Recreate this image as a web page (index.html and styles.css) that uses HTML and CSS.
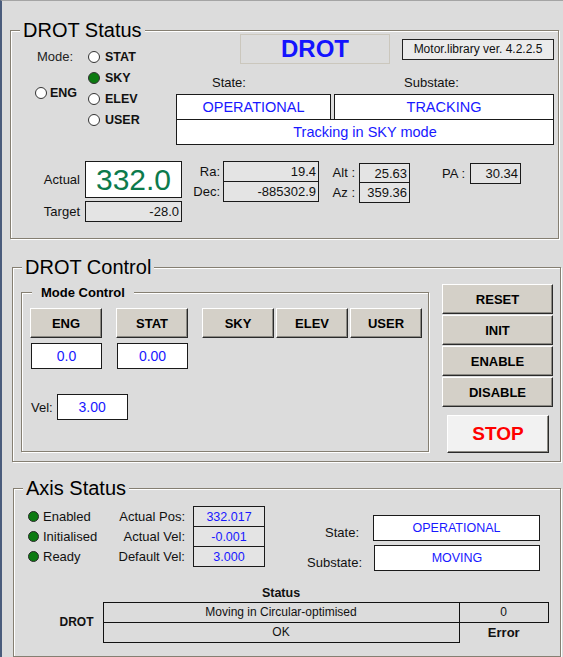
FILE: index.html
```html
<!DOCTYPE html>
<html lang="en">
<head>
  <meta charset="UTF-8">
  <meta name="viewport" content="width=device-width, initial-scale=1.0">
  <title>DROT</title>
  <link rel="stylesheet" href="styles.css">
</head>
<body>
  <div class="screen">

    <!-- DROT Status -->
    <fieldset class="group status-group">
      <legend>DROT Status</legend>
      <div class="status-top">
        <div class="mode-select">
          <span class="mode-label">Mode:</span>
          <span class="radio r-stat"><span class="dot"></span>STAT</span>
          <span class="radio r-sky"><span class="dot on"></span>SKY</span>
          <span class="radio r-eng"><span class="dot"></span>ENG</span>
          <span class="radio r-elev"><span class="dot"></span>ELEV</span>
          <span class="radio r-user"><span class="dot"></span>USER</span>
        </div>
        <div class="state-area">
          <div class="state-head">
            <div class="drot-title">DROT</div>
            <div class="lib-version">Motor.library ver. 4.2.2.5</div>
          </div>
          <div class="state-labels">
            <span class="lbl-state">State:</span>
            <span>Substate:</span>
          </div>
          <div class="state-row">
            <div class="field white blue state-cell">OPERATIONAL</div>
            <div class="field white blue substate-cell">TRACKING</div>
          </div>
          <div class="field white blue mode-text">Tracking in SKY mode</div>
        </div>
      </div>

      <div class="status-values">
        <div class="vals vals-actual">
          <span class="lbl">Actual</span>
          <div class="field white actual-val">332.0</div>
          <span class="lbl">Target</span>
          <div class="field grey num">-28.0</div>
        </div>
        <div class="vals vals-radec">
          <span class="lbl">Ra:</span>
          <div class="field grey num open">19.4</div>
          <span class="lbl">Dec:</span>
          <div class="field grey num">-885302.9</div>
        </div>
        <div class="vals vals-altaz">
          <span class="lbl">Alt :</span>
          <div class="field grey num open">25.63</div>
          <span class="lbl">Az :</span>
          <div class="field grey num">359.36</div>
        </div>
        <div class="vals vals-pa">
          <span class="lbl">PA :</span>
          <div class="field grey num">30.34</div>
        </div>
      </div>
    </fieldset>

    <!-- DROT Control -->
    <fieldset class="group control-group">
      <legend>DROT Control</legend>
      <div class="control-row">
        <fieldset class="group mode-group">
          <legend>Mode Control</legend>
          <div class="mode-buttons">
            <div class="mode-col">
              <div class="btn">ENG</div>
              <div class="field white blue setval">0.0</div>
            </div>
            <div class="mode-col">
              <div class="btn">STAT</div>
              <div class="field white blue setval">0.00</div>
            </div>
            <div class="btn sky-btn">SKY</div>
            <div class="btn">ELEV</div>
            <div class="btn">USER</div>
          </div>
          <div class="vel-row">
            <span>Vel:</span>
            <div class="field white blue setval">3.00</div>
          </div>
        </fieldset>

        <div class="cmd-col">
          <div class="btn wide">RESET</div>
          <div class="btn wide">INIT</div>
          <div class="btn wide">ENABLE</div>
          <div class="btn wide">DISABLE</div>
          <div class="btn stop">STOP</div>
        </div>
      </div>
    </fieldset>

    <!-- Axis Status -->
    <fieldset class="group axis-group">
      <legend>Axis Status</legend>
      <div class="axis-top">
        <div class="axis-info">
          <span class="led-item"><span class="led"></span>Enabled</span>
          <span class="lbl">Actual Pos:</span>
          <div class="field grey blue open">332.017</div>
          <span class="led-item"><span class="led"></span>Initialised</span>
          <span class="lbl">Actual Vel:</span>
          <div class="field grey blue open">-0.001</div>
          <span class="led-item"><span class="led"></span>Ready</span>
          <span class="lbl">Default Vel:</span>
          <div class="field grey blue last">3.000</div>
        </div>
        <div class="axis-state">
          <span class="lbl lbl-st">State:</span>
          <div class="field white blue">OPERATIONAL</div>
          <span class="lbl">Substate:</span>
          <div class="field white blue sub-box">MOVING</div>
        </div>
      </div>

      <table class="status-table">
        <colgroup>
          <col class="c-name">
          <col class="c-msg">
          <col class="c-code">
        </colgroup>
        <tr class="head-row">
          <td></td>
          <td class="head">Status</td>
          <td></td>
        </tr>
        <tr>
          <td class="name" rowspan="2">DROT</td>
          <td class="cell">Moving in Circular-optimised</td>
          <td class="cell">0</td>
        </tr>
        <tr>
          <td class="cell">OK</td>
          <td class="err">Error</td>
        </tr>
      </table>
    </fieldset>

  </div>
</body>
</html>
```

FILE: styles.css
```css
* {
  box-sizing: border-box;
}

body {
  margin: 0;
  background-color: #dcdcdc;
  font-family: "Liberation Sans", Arial, sans-serif;
  font-size: 13px;
  color: #111;
}

.screen {
  height: 657px;
  border-left: 2px solid #4a5c7c;
  border-top: 1px solid #a4a4a4;
  overflow: hidden;
}

/* group boxes */
.group {
  margin: 0;
  padding: 0;
  min-width: 0;
  border: 1px solid #857f72;
  box-shadow: inset 1px 1px 0 #fff, 1px 1px 0 #fff;
}

.group > legend {
  font-size: 20px;
  line-height: 9px;
  padding: 0 3px;
  margin-left: 9px;
  background-color: #dcdcdc;
  color: #000;
}

.status-group {
  margin: 25px 0 0 8px;
  width: 549px;
  padding-bottom: 16px;
}

.control-group {
  margin: 24px 0 0 10px;
  width: 549px;
  padding-bottom: 8px;
}

.axis-group {
  margin: 22px 0 0 11px;
  width: 548px;
  padding-bottom: 13px;
}

/* fields */
.field {
  border: 1px solid #1a1a1a;
  display: flex;
  align-items: center;
  justify-content: center;
  white-space: nowrap;
}

.field.open {
  border-bottom: none;
}

.white {
  background-color: #fff;
}

.grey {
  background-color: #e4e4e4;
}

.blue {
  color: #1818ff;
}

.num {
  justify-content: flex-end;
  padding-right: 2px;
}

.lbl {
  display: flex;
  align-items: center;
  justify-content: flex-end;
  white-space: nowrap;
}

/* DROT Status */
.status-top {
  display: flex;
  align-items: flex-start;
}

.mode-select {
  margin: 11px 0 0 24px;
  width: 141px;
  display: grid;
  grid-template-columns: 53px auto;
  grid-template-rows: repeat(4, 21px);
}

.mode-label {
  grid-column: 1;
  grid-row: 1;
  padding-left: 2px;
  align-self: center;
  color: #222;
}

.radio {
  grid-column: 2;
  display: flex;
  align-items: center;
  gap: 5px;
  font-weight: bold;
  font-size: 12.5px;
}

.r-stat { grid-row: 1; }
.r-sky { grid-row: 2; }
.r-elev { grid-row: 3; }
.r-user { grid-row: 4; }

.r-eng {
  grid-column: 1;
  grid-row: 2 / 4;
  margin-top: 10px;
  gap: 3px;
}

.dot {
  width: 12px;
  height: 12px;
  border-radius: 50%;
  border: 1px solid #333;
  background-color: #fff;
}

.dot.on {
  background-color: #0b7a10;
}

.state-area {
  margin-top: -1px;
  width: 378px;
}

.state-head {
  height: 30px;
  display: flex;
  align-items: center;
}

.drot-title {
  margin-left: 64px;
  width: 150px;
  height: 30px;
  border: 1px solid #cbc7bd;
  color: #1414ff;
  font-size: 24px;
  font-weight: bold;
  display: flex;
  align-items: center;
  justify-content: center;
}

.lib-version {
  margin-left: 12px;
  width: 152px;
  height: 21px;
  border: 1px solid #222;
  background-color: #ebebeb;
  font-size: 12px;
  display: flex;
  align-items: center;
  justify-content: center;
}

.state-labels {
  height: 30px;
  display: flex;
  align-items: flex-end;
  padding-bottom: 4px;
}

.lbl-state {
  width: 228px;
  padding-left: 36px;
}

.state-row {
  display: flex;
  gap: 3px;
  font-size: 14.5px;
}

.state-row .field {
  height: 26px;
}

.state-cell {
  width: 155px;
}

.substate-cell {
  width: 220px;
}

.mode-text {
  height: 26px;
  margin-top: -1px;
  font-size: 14.5px;
}

.status-values {
  display: flex;
  align-items: flex-start;
  margin-top: 16px;
}

.vals {
  display: grid;
}

.vals-actual {
  margin-left: 19px;
  grid-template-columns: 50px 97px;
  grid-template-rows: 37px 21px;
  column-gap: 5px;
  row-gap: 3px;
}

.actual-val {
  color: #0c7a4c;
  font-size: 30px;
}

.vals-radec {
  margin-left: 8px;
  grid-template-columns: 30px 96px;
  grid-template-rows: 20px 21px;
  column-gap: 3px;
}

.vals-altaz {
  margin: 2px 0 0 12px;
  grid-template-columns: 24px 51px;
  grid-template-rows: 19px 21px;
  column-gap: 4px;
}

.vals-pa {
  margin: 2px 0 0 30px;
  grid-template-columns: 25px 51px;
  grid-template-rows: 21px;
  column-gap: 5px;
}

/* DROT Control */
.control-row {
  display: flex;
  align-items: flex-start;
}

.mode-group {
  margin: 16px 0 0 8px;
  width: 408px;
  padding-bottom: 31px;
}

.mode-group > legend {
  font-size: 13px;
  font-weight: bold;
  padding: 0 9px;
  margin-left: 10px;
}

.mode-buttons {
  display: flex;
  align-items: flex-start;
  margin: 11px 0 0 8px;
}

.mode-col {
  display: flex;
  flex-direction: column;
  margin-right: 14px;
}

.sky-btn {
  margin-right: 2px;
}

.btn {
  width: 72px;
  height: 30px;
  margin-right: 2px;
  background-color: #d4d0c8;
  border: 1px solid;
  border-color: #fff #2a2a2a #2a2a2a #fff;
  box-shadow: inset -1px -1px 0 #8c8a84;
  font-weight: bold;
  font-size: 13px;
  color: #000;
  display: flex;
  align-items: center;
  justify-content: center;
}

.mode-col .btn {
  margin-right: 0;
}

.setval {
  width: 71px;
  height: 26px;
  margin: 5px 0 0 1px;
  font-size: 14px;
}

.vel-row {
  display: flex;
  align-items: center;
  gap: 4px;
  margin: 25px 0 0 9px;
}

.vel-row .setval {
  margin: 0;
}

.cmd-col {
  margin: 12px 0 0 13px;
  width: 111px;
  display: flex;
  flex-direction: column;
  gap: 1px;
}

.btn.wide {
  width: 111px;
  margin: 0;
}

.btn.stop {
  width: 102px;
  height: 38px;
  margin: 7px 0 0 5px;
  background-color: #f2f2f2;
  color: #f00;
  font-size: 19px;
}

/* Axis Status */
.axis-top {
  display: flex;
  align-items: flex-start;
}

.axis-info {
  margin: 13px 0 0 14px;
  display: grid;
  grid-template-columns: 72px 77px 72px;
  grid-template-rows: repeat(3, 20px);
  column-gap: 8px;
}

.axis-info .field {
  font-size: 12.5px;
}

.axis-info .field.last {
  height: 21px;
}

.led-item {
  display: flex;
  align-items: center;
  gap: 4px;
  white-space: nowrap;
}

.led {
  width: 11px;
  height: 11px;
  border-radius: 50%;
  border: 1px solid #2a2a2a;
  background-color: #0b7a10;
}

.axis-state {
  margin: 22px 0 0 25px;
  display: grid;
  grid-template-columns: 72px 167px;
  grid-template-rows: 26px 26px;
  column-gap: 11px;
  row-gap: 4px;
}

.axis-state .lbl {
  padding-top: 8px;
}

.axis-state .field {
  font-size: 12.5px;
}

.axis-state .sub-box {
  margin-left: 1px;
}

.lbl-st {
  padding-right: 3px;
}

.status-table {
  margin-top: 13px;
  border-collapse: collapse;
  table-layout: fixed;
  width: 534px;
  font-size: 12px;
}

.c-name { width: 89px; }
.c-msg { width: 356px; }
.c-code { width: 89px; }

.status-table td {
  padding: 0;
  height: 20px;
  text-align: center;
}

.head-row td {
  height: 18px;
}

.head {
  font-weight: bold;
  font-size: 12.5px;
}

.cell {
  border: 1px solid #111;
}

.name {
  text-align: right !important;
  padding-right: 9px !important;
  font-weight: bold;
}

.err {
  font-weight: bold;
  font-size: 13px;
}
```
